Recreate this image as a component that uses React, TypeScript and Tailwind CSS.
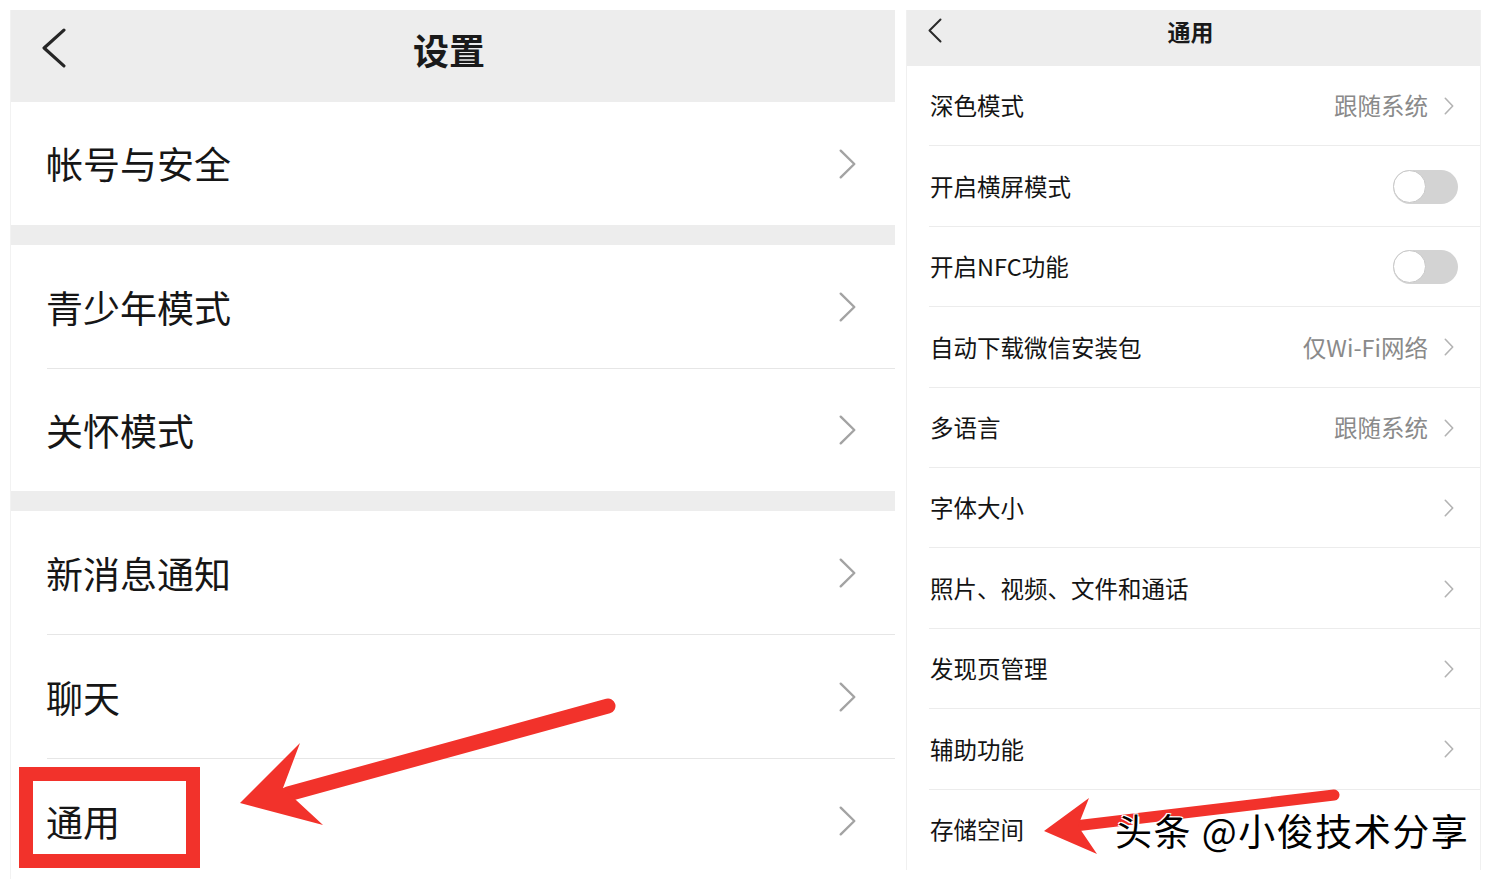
import React from "react";

const FONT = { fontFamily: '"Noto Sans CJK SC", "Noto Sans", sans-serif' };

function Chev({ w, h, sw, color, left = false }: { w: number; h: number; sw: number; color: string; left?: boolean }) {
  const p = sw / 2 + 0.5;
  const pts = left
    ? `${w - p},${p} ${p},${h / 2} ${w - p},${h - p}`
    : `${p},${p} ${w - p},${h / 2} ${p},${h - p}`;
  return (
    <svg width={w} height={h} viewBox={`0 0 ${w} ${h}`} className="shrink-0">
      <polyline points={pts} fill="none" stroke={color} strokeWidth={sw} strokeLinecap="round" strokeLinejoin="round" />
    </svg>
  );
}

function LeftRow({ label, h, divider = false }: { label: string; h: string; divider?: boolean }) {
  return (
    <div className={`relative flex items-center ${h} bg-white pl-[35px] pr-[39px]`}>
      <span className="flex-1 text-[37px] leading-none text-[#161616]">{label}</span>
      <Chev w={17} h={30} sw={2.4} color="#a3a3a3" />
      {divider && <div className="absolute bottom-0 left-[36px] right-0 h-px bg-[#e6e6e6]" />}
    </div>
  );
}

function Toggle() {
  return (
    <div className="flex h-[34px] w-[65px] items-center rounded-full bg-[#d3d3d3]">
      <div className="h-[33px] w-[33px] rounded-full border border-[#c8c8c8] bg-white" />
    </div>
  );
}

function RightRow({ label, value, toggle, last }: { label: string; value?: string; toggle?: boolean; last?: boolean }) {
  return (
    <div className="relative flex h-[80.4px] items-center pl-[23px] pr-[22px]">
      <span className="flex-1 text-[23.5px] leading-none text-[#141414]">{label}</span>
      {toggle ? (
        <Toggle />
      ) : (
        <div className="flex items-center">
          {value && <span className="mr-[16px] text-[23.5px] leading-none text-[#8a8a8a]">{value}</span>}
          <span className="mr-[4px]">
            <Chev w={10} h={18} sw={1.6} color="#b3b3b3" />
          </span>
        </div>
      )}
      {!last && <div className="absolute bottom-0 left-[22px] right-0 h-px bg-[#ececec]" />}
    </div>
  );
}

export default function App() {
  return (
    <div className="relative h-[879px] w-[1491px] overflow-hidden bg-white" style={FONT}>
      <div className="flex items-start gap-[11px] pl-[10px] pt-[10px]">
        {/* Left panel */}
        <div className="flex w-[885px] flex-col border-l border-[#f2f2f2]">
          <div className="relative flex h-[92px] items-center justify-center bg-[#ededed]">
            <div className="absolute left-[31px] top-[18px]">
              <Chev w={24} h={40} sw={3.2} color="#262626" left />
            </div>
            <span className="-translate-x-[4px] -translate-y-[7px] text-[36px] font-bold leading-none text-[#1a1a1a]">设置</span>
          </div>
          <LeftRow label="帐号与安全" h="h-[123px]" />
          <div className="h-[20px] bg-[#ededed]" />
          <LeftRow label="青少年模式" h="h-[124px]" divider />
          <LeftRow label="关怀模式" h="h-[122px]" />
          <div className="h-[20px] bg-[#ededed]" />
          <LeftRow label="新消息通知" h="h-[124px]" divider />
          <LeftRow label="聊天" h="h-[124px]" divider />
          <LeftRow label="通用" h="h-[124px]" />
        </div>

        {/* Right panel */}
        <div className="flex w-[575px] flex-col border-x border-[#f0f0f0]">
          <div className="relative flex h-[56px] items-center justify-center bg-[#ededed]">
            <div className="absolute left-[21px] top-[8px]">
              <Chev w={14} h={25} sw={2} color="#2a2a2a" left />
            </div>
            <span className="-translate-x-[3px] -translate-y-[7px] text-[23px] font-bold leading-none text-[#1a1a1a]">通用</span>
          </div>
          <RightRow label="深色模式" value="跟随系统" />
          <RightRow label="开启横屏模式" toggle />
          <RightRow label="开启NFC功能" toggle />
          <RightRow label="自动下载微信安装包" value="仅Wi-Fi网络" />
          <RightRow label="多语言" value="跟随系统" />
          <RightRow label="字体大小" />
          <RightRow label="照片、视频、文件和通话" />
          <RightRow label="发现页管理" />
          <RightRow label="辅助功能" />
          <RightRow label="存储空间" last />
        </div>
      </div>

      {/* Annotations overlay */}
      <div className="pointer-events-none absolute left-[19px] top-[767px] h-[101px] w-[181px] border-[14px] border-[#f2322b]" />
      <svg className="pointer-events-none absolute left-0 top-0" width={1491} height={879} viewBox="0 0 1491 879">
        <line x1={288} y1={794} x2={608} y2={706} stroke="#f2322b" strokeWidth={15} strokeLinecap="round" />
        <polygon points="240,803 300,743 283,788 323,825" fill="#f2322b" />
        <line x1={1075} y1={826} x2={1334} y2={795} stroke="#f2322b" strokeWidth={11} strokeLinecap="round" />
        <polygon points="1044,831 1089,798 1078,826 1097,854" fill="#f2322b" />
      </svg>
      <div
        className="pointer-events-none absolute left-[1115px] top-[812px] whitespace-nowrap text-[37px] leading-none tracking-[1.5px] text-black"
        style={{ textShadow: "2px 2px 0 #fff, -1px -1px 0 #fff, 1px -1px 0 #fff, -1px 1px 0 #fff" }}
      >
        头条 @小俊技术分享
      </div>
    </div>
  );
}
